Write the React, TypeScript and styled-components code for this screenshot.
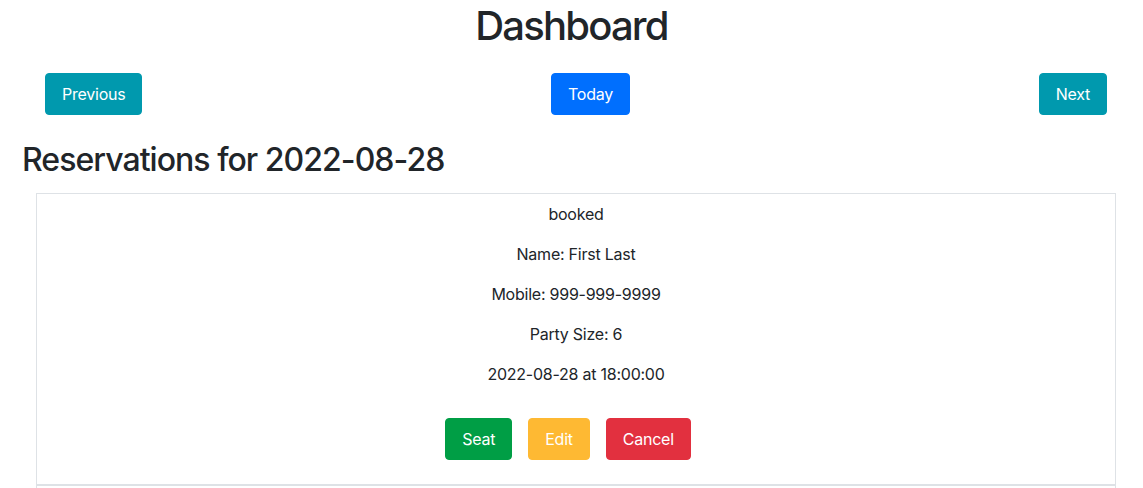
import React from 'react';
import styled, { createGlobalStyle } from 'styled-components';

const GlobalStyle = createGlobalStyle`
  * { box-sizing: border-box; }
  body {
    margin: 0;
    background: #fff;
    color: #212529;
    font-family: Inter, "Noto Sans", "Liberation Sans", sans-serif;
    font-size: 16px;
    line-height: 1.5;
    letter-spacing: -0.015em;
  }
`;

const Page = styled.main`
  display: flex;
  flex-direction: column;
`;

const Title = styled.h1`
  margin: 0;
  padding-top: 2px;
  text-align: center;
  font-size: 40px;
  font-weight: 500;
  line-height: 48px;
  letter-spacing: -0.045em;
`;

const NavRow = styled.div`
  display: flex;
  justify-content: space-between;
  align-items: center;
  padding: 0 36px 0 45px;
  margin-top: 23px;
`;

type Variant = 'info' | 'primary' | 'success' | 'warning' | 'danger';

const colors: Record<Variant, string> = {
  info: '#0099ae',
  primary: '#006ffe',
  success: '#009e45',
  warning: '#feb933',
  danger: '#e2303f',
};

const Button = styled.button<{ $variant: Variant }>`
  height: 42px;
  padding: 0 16px;
  border: 1px solid ${(p) => colors[p.$variant]};
  border-radius: 4px;
  background: ${(p) => colors[p.$variant]};
  color: #fff;
  font-family: inherit;
  font-size: 16px;
  line-height: 24px;
  letter-spacing: inherit;
  cursor: pointer;
`;

const SubTitle = styled.h2`
  margin: 26px 0 0 22px;
  font-size: 32px;
  font-weight: 500;
  line-height: 38px;
  letter-spacing: -0.03em;
`;

const Card = styled.section`
  margin: 14px 27px 0 36px;
  border: 1px solid #dee2e6;
  border-bottom: none;
  height: 300px;
  display: flex;
  flex-direction: column;
`;

const Body = styled.div`
  padding: 8px 0 24px;
  text-align: center;
  border-bottom: 2px solid #dee2e6;
`;

const Line = styled.p`
  margin: 0 0 16px;
`;

const Actions = styled.div`
  display: flex;
  justify-content: center;
  padding-top: 16px;
  & > button {
    margin-right: 16px;
  }
`;

export default function App() {
  return (
    <>
      <GlobalStyle />
      <Page>
        <Title>Dashboard</Title>
        <NavRow>
          <Button $variant="info">Previous</Button>
          <Button $variant="primary">Today</Button>
          <Button $variant="info">Next</Button>
        </NavRow>
        <SubTitle>Reservations for 2022-08-28</SubTitle>
        <Card>
          <Body>
            <Line>booked</Line>
            <Line>Name: First Last</Line>
            <Line>Mobile: 999-999-9999</Line>
            <Line>Party Size: 6</Line>
            <Line>2022-08-28 at 18:00:00</Line>
            <Actions>
              <Button $variant="success">Seat</Button>
              <Button $variant="warning">Edit</Button>
              <Button $variant="danger">Cancel</Button>
            </Actions>
          </Body>
        </Card>
      </Page>
    </>
  );
}
